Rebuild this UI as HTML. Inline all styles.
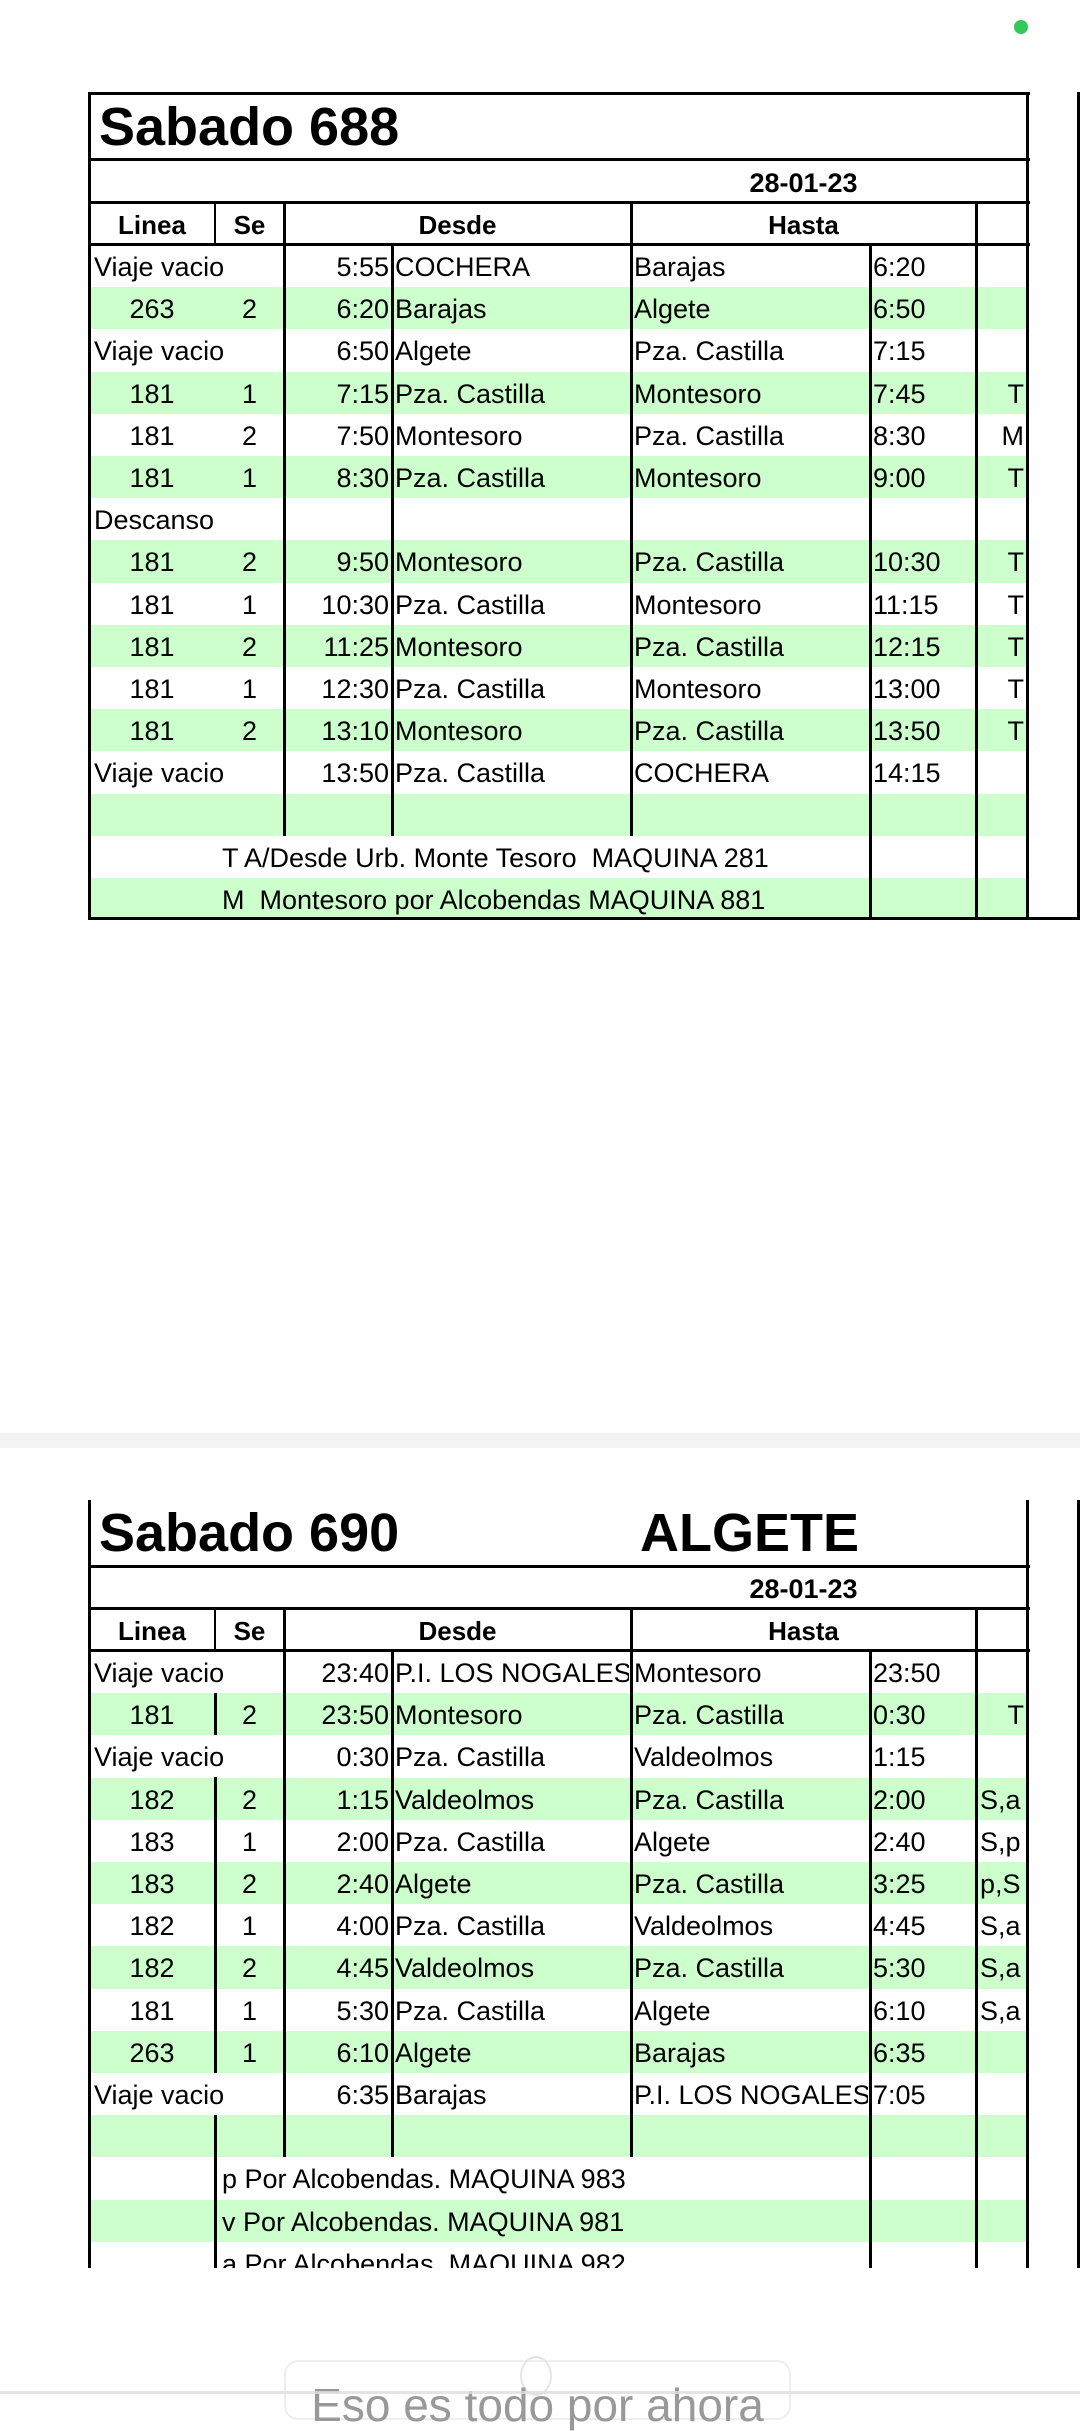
<!DOCTYPE html>
<html><head><meta charset="utf-8"><style>
*{margin:0;padding:0;box-sizing:border-box}
body{width:1080px;height:2400px;background:#fff;position:relative;overflow:hidden;font-family:"Liberation Sans",Arial,sans-serif;color:#000}
.v{position:absolute;width:3px;background:#000}
.hl{position:absolute;height:3px;background:#000}
.r{position:absolute;left:89px;width:938px;height:42.2px;font-size:27px;line-height:44px;white-space:nowrap}
.g{background:#ccffcc}
.r span{position:absolute;top:0}
.a{left:0;width:126px;text-align:center}
.b{left:126px;width:69px;text-align:center}
.c{left:0;width:300px;text-align:right}
.d{left:306px}
.e{left:545px}
.f{left:784px}
.h{left:887px;width:48px;text-align:right}
.h2{left:891px}
.vv{left:5px}
.ft{left:133px}
.t{position:absolute;font-weight:bold;font-size:54px;line-height:60px}
.hd{position:absolute;font-weight:bold;font-size:26px;line-height:40px;text-align:center}
.sep{position:absolute;left:0;width:1080px;top:1433px;height:15px;background:#f3f3f3}
</style></head><body>
<div style="position:absolute;left:1014px;top:20px;width:14px;height:14px;border-radius:50%;background:#34c759"></div>

<!-- TABLE 1 -->
<div class="r" style="top:245px"><span class="vv">Viaje vacio</span><span class="c">5:55</span><span class="d">COCHERA</span><span class="e">Barajas</span><span class="f">6:20</span></div>
<div class="r g" style="top:287.2px"><span class="a">263</span><span class="b">2</span><span class="c">6:20</span><span class="d">Barajas</span><span class="e">Algete</span><span class="f">6:50</span></div>
<div class="r" style="top:329.4px"><span class="vv">Viaje vacio</span><span class="c">6:50</span><span class="d">Algete</span><span class="e">Pza. Castilla</span><span class="f">7:15</span></div>
<div class="r g" style="top:371.6px"><span class="a">181</span><span class="b">1</span><span class="c">7:15</span><span class="d">Pza. Castilla</span><span class="e">Montesoro</span><span class="f">7:45</span><span class="h">T</span></div>
<div class="r" style="top:413.8px"><span class="a">181</span><span class="b">2</span><span class="c">7:50</span><span class="d">Montesoro</span><span class="e">Pza. Castilla</span><span class="f">8:30</span><span class="h">M</span></div>
<div class="r g" style="top:456px"><span class="a">181</span><span class="b">1</span><span class="c">8:30</span><span class="d">Pza. Castilla</span><span class="e">Montesoro</span><span class="f">9:00</span><span class="h">T</span></div>
<div class="r" style="top:498.2px"><span class="vv">Descanso</span></div>
<div class="r g" style="top:540.4px"><span class="a">181</span><span class="b">2</span><span class="c">9:50</span><span class="d">Montesoro</span><span class="e">Pza. Castilla</span><span class="f">10:30</span><span class="h">T</span></div>
<div class="r" style="top:582.6px"><span class="a">181</span><span class="b">1</span><span class="c">10:30</span><span class="d">Pza. Castilla</span><span class="e">Montesoro</span><span class="f">11:15</span><span class="h">T</span></div>
<div class="r g" style="top:624.8px"><span class="a">181</span><span class="b">2</span><span class="c">11:25</span><span class="d">Montesoro</span><span class="e">Pza. Castilla</span><span class="f">12:15</span><span class="h">T</span></div>
<div class="r" style="top:667px"><span class="a">181</span><span class="b">1</span><span class="c">12:30</span><span class="d">Pza. Castilla</span><span class="e">Montesoro</span><span class="f">13:00</span><span class="h">T</span></div>
<div class="r g" style="top:709.2px"><span class="a">181</span><span class="b">2</span><span class="c">13:10</span><span class="d">Montesoro</span><span class="e">Pza. Castilla</span><span class="f">13:50</span><span class="h">T</span></div>
<div class="r" style="top:751.4px"><span class="vv">Viaje vacio</span><span class="c">13:50</span><span class="d">Pza. Castilla</span><span class="e">COCHERA</span><span class="f">14:15</span></div>
<div class="r g" style="top:793.6px"></div>
<div class="r" style="top:835.8px"><span class="ft">T A/Desde Urb. Monte Tesoro&nbsp; MAQUINA 281</span></div>
<div class="r g" style="top:878px;height:40px"><span class="ft">M&nbsp; Montesoro por Alcobendas MAQUINA 881</span></div>

<div class="t" style="left:99px;top:97px">Sabado 688</div>
<div class="hd" style="left:631px;width:345px;top:163px;font-size:27px">28-01-23</div>
<div class="hd" style="left:89px;width:126px;top:205px">Linea</div>
<div class="hd" style="left:215px;width:69px;top:205px">Se</div>
<div class="hd" style="left:284px;width:347px;top:205px">Desde</div>
<div class="hd" style="left:631px;width:345px;top:205px">Hasta</div>

<div class="hl" style="left:89px;width:941px;top:92px"></div>
<div class="hl" style="left:89px;width:941px;top:158px"></div>
<div class="hl" style="left:89px;width:941px;top:201px"></div>
<div class="hl" style="left:89px;width:941px;top:243px"></div>
<div class="hl" style="left:89px;width:991px;top:917px"></div>
<div class="v" style="left:88px;top:92px;height:828px"></div>
<div class="v" style="left:1026px;top:92px;height:828px"></div>
<div class="v" style="left:1077px;top:92px;height:828px"></div>
<div class="v" style="left:214px;top:201px;height:44px;width:2px"></div>
<div class="v" style="left:283px;top:201px;height:635px"></div>
<div class="v" style="left:391px;top:243px;height:593px"></div>
<div class="v" style="left:630px;top:201px;height:635px"></div>
<div class="v" style="left:869px;top:243px;height:677px"></div>
<div class="v" style="left:975px;top:201px;height:719px"></div>

<div class="sep"></div>

<!-- TABLE 2 -->
<div style="position:absolute;left:0;top:0;width:1080px;height:2268px;overflow:hidden">
<div class="r" style="top:1651px"><span class="vv">Viaje vacio</span><span class="c">23:40</span><span class="d" style="width:234px;overflow:hidden">P.I. LOS NOGALES</span><span class="e">Montesoro</span><span class="f">23:50</span></div>
<div class="r g" style="top:1693.2px"><span class="a">181</span><span class="b">2</span><span class="c">23:50</span><span class="d">Montesoro</span><span class="e">Pza. Castilla</span><span class="f">0:30</span><span class="h">T</span></div>
<div class="r" style="top:1735.4px"><span class="vv">Viaje vacio</span><span class="c">0:30</span><span class="d">Pza. Castilla</span><span class="e">Valdeolmos</span><span class="f">1:15</span></div>
<div class="r g" style="top:1777.6px"><span class="a">182</span><span class="b">2</span><span class="c">1:15</span><span class="d">Valdeolmos</span><span class="e">Pza. Castilla</span><span class="f">2:00</span><span class="h2">S,a</span></div>
<div class="r" style="top:1819.8px"><span class="a">183</span><span class="b">1</span><span class="c">2:00</span><span class="d">Pza. Castilla</span><span class="e">Algete</span><span class="f">2:40</span><span class="h2">S,p</span></div>
<div class="r g" style="top:1862px"><span class="a">183</span><span class="b">2</span><span class="c">2:40</span><span class="d">Algete</span><span class="e">Pza. Castilla</span><span class="f">3:25</span><span class="h2">p,S</span></div>
<div class="r" style="top:1904.2px"><span class="a">182</span><span class="b">1</span><span class="c">4:00</span><span class="d">Pza. Castilla</span><span class="e">Valdeolmos</span><span class="f">4:45</span><span class="h2">S,a</span></div>
<div class="r g" style="top:1946.4px"><span class="a">182</span><span class="b">2</span><span class="c">4:45</span><span class="d">Valdeolmos</span><span class="e">Pza. Castilla</span><span class="f">5:30</span><span class="h2">S,a</span></div>
<div class="r" style="top:1988.6px"><span class="a">181</span><span class="b">1</span><span class="c">5:30</span><span class="d">Pza. Castilla</span><span class="e">Algete</span><span class="f">6:10</span><span class="h2">S,a</span></div>
<div class="r g" style="top:2030.8px"><span class="a">263</span><span class="b">1</span><span class="c">6:10</span><span class="d">Algete</span><span class="e">Barajas</span><span class="f">6:35</span></div>
<div class="r" style="top:2073px"><span class="vv">Viaje vacio</span><span class="c">6:35</span><span class="d">Barajas</span><span class="e" style="width:234px;overflow:hidden">P.I. LOS NOGALES</span><span class="f">7:05</span></div>
<div class="r g" style="top:2115.2px"></div>
<div class="r" style="top:2157.4px"><span class="ft">p Por Alcobendas. MAQUINA 983</span></div>
<div class="r g" style="top:2199.6px"><span class="ft">v Por Alcobendas. MAQUINA 981</span></div>
<div class="r" style="top:2241.8px"><span class="ft">a Por Alcobendas. MAQUINA 982</span></div>

<div class="t" style="left:99px;top:1503px">Sabado 690</div>
<div class="t" style="left:640px;top:1503px">ALGETE</div>
<div class="hd" style="left:631px;width:345px;top:1569px;font-size:27px">28-01-23</div>
<div class="hd" style="left:89px;width:126px;top:1611px">Linea</div>
<div class="hd" style="left:215px;width:69px;top:1611px">Se</div>
<div class="hd" style="left:284px;width:347px;top:1611px">Desde</div>
<div class="hd" style="left:631px;width:345px;top:1611px">Hasta</div>

<div class="hl" style="left:89px;width:941px;top:1565px"></div>
<div class="hl" style="left:89px;width:941px;top:1607px"></div>
<div class="hl" style="left:89px;width:941px;top:1649px"></div>
<div class="v" style="left:88px;top:1500px;height:770px"></div>
<div class="v" style="left:1026px;top:1500px;height:770px"></div>
<div class="v" style="left:1077px;top:1500px;height:770px"></div>
<div class="v" style="left:214px;top:1607px;height:44px;width:2px"></div>
<div class="v" style="left:214px;top:1693px;height:42px"></div>
<div class="v" style="left:214px;top:1777px;height:296px"></div>
<div class="v" style="left:214px;top:2115px;height:160px"></div>
<div class="v" style="left:283px;top:1607px;height:550px"></div>
<div class="v" style="left:391px;top:1649px;height:508px"></div>
<div class="v" style="left:630px;top:1607px;height:550px"></div>
<div class="v" style="left:869px;top:1649px;height:620px"></div>
<div class="v" style="left:975px;top:1607px;height:662px"></div>
</div>

<!-- bottom -->
<div style="position:absolute;left:284px;top:2360px;width:507px;height:60px;border:2px solid #eee;border-radius:14px;background:#fff"></div>
<div style="position:absolute;left:520px;top:2356px;width:32px;height:40px;border:2px solid #e4e4e4;border-radius:50%"></div>
<div style="position:absolute;left:284px;width:507px;top:2380px;text-align:center;font-size:46px;line-height:50px;color:#999">Eso es todo por ahora</div>
<div style="position:absolute;left:0;top:2391px;width:1080px;height:3px;background:#ddd;opacity:.8"></div>
</body></html>
